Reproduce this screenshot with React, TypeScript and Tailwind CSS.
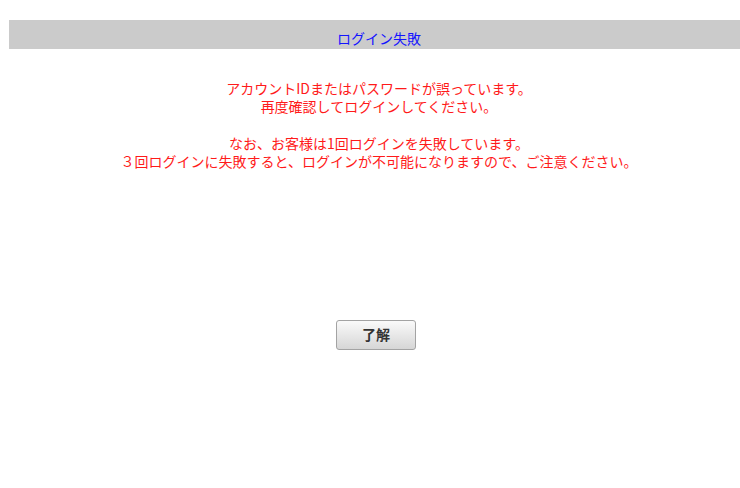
export default function App() {
  const font = { fontFamily: '"Noto Sans CJK JP", "Noto Sans", sans-serif' };
  return (
    <div className="w-[740px] h-[488px] overflow-hidden bg-white" style={font}>
      <div className="w-[740px] ml-[9px] pt-[20px]">
        <div className="h-[29px] bg-[#cbcbcb] text-center text-[14px] leading-[18px] pt-[9px] text-[#1414ff]">
          ログイン失敗
        </div>
        <div className="w-[740px] pt-[30px] text-center text-[14px] leading-[18.3px] text-[#ff1a1a]">
          <p>アカウントIDまたはパスワードが誤っています。</p>
          <p>再度確認してログインしてください。</p>
          <p className="mt-[18.5px]">なお、お客様は1回ログインを失敗しています。</p>
          <p>３回ログインに失敗すると、ログインが不可能になりますので、ご注意ください。</p>
        </div>
        <div className="w-[734px] flex justify-center pt-[149px]">
          <button
            type="button"
            className="w-[80px] h-[30px] rounded-[3px] border border-[#a3a3a3] bg-gradient-to-b from-[#fafafa] to-[#d6d6d6] text-[14px] font-bold text-[#333]"
          >
            了解
          </button>
        </div>
      </div>
    </div>
  );
}
